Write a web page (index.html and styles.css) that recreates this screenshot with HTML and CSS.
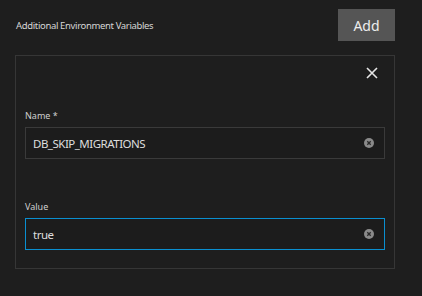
FILE: index.html
```html
<!DOCTYPE html>
<html lang="en">
  <head>
    <meta charset="UTF-8" />
    <meta name="viewport" content="width=device-width, initial-scale=1.0" />
    <title>Environment Variables</title>
    <link rel="stylesheet" href="styles.css">
  </head>
  <body>
    <div class="header">
      <span class="title">Additional Environment Variables</span>
      <button class="add-btn">Add</button>
    </div>

    <div class="card">
      <div class="close-row">
        <svg class="close" width="12" height="12" viewBox="0 0 12 12">
          <path d="M1 1 L11 11 M11 1 L1 11" stroke="#e6e6e6" stroke-width="1.6" fill="none" />
        </svg>
      </div>

      <div class="field first">
        <label class="label">Name *</label>
        <div class="input">
          <span class="value">DB_SKIP_MIGRATIONS</span>
          <span class="clear">
            <svg width="10" height="10" viewBox="0 0 10 10">
              <path d="M3.3 3.3 L6.7 6.7 M6.7 3.3 L3.3 6.7" stroke="#2a2a2a" stroke-width="1.3" />
            </svg>
          </span>
        </div>
      </div>

      <div class="field second">
        <label class="label">Value</label>
        <div class="input focused">
          <span class="value">true</span>
          <span class="clear">
            <svg width="10" height="10" viewBox="0 0 10 10">
              <path d="M3.3 3.3 L6.7 6.7 M6.7 3.3 L3.3 6.7" stroke="#2a2a2a" stroke-width="1.3" />
            </svg>
          </span>
        </div>
      </div>
    </div>
  </body>
</html>
```

FILE: styles.css
```css
body {
  margin: 0;
  background-color: #1e1e1e;
  font-family: "Noto Sans", "Open Sans", sans-serif;
  color: #dcdcdc;
}

.header {
  display: flex;
  justify-content: space-between;
  align-items: center;
  padding: 9px 27px 0 16px;
}

.title {
  font-size: 9.5px;
  color: #d6d6d6;
  letter-spacing: -0.35px;
}

.add-btn {
  width: 57px;
  height: 32px;
  border: none;
  background-color: #555555;
  color: #ededed;
  font-family: "Noto Sans", "Open Sans", sans-serif;
  font-size: 14px;
  padding: 0;
  cursor: pointer;
}

.card {
  margin: 14px 27px 0 15px;
  border: 1px solid #363636;
  padding: 11px 9px 18px 9px;
}

.close-row {
  display: flex;
  justify-content: flex-end;
  padding-right: 7px;
  height: 12px;
}

.close {
  display: block;
}

.field.first {
  margin-top: 31px;
}

.field.second {
  margin-top: 42px;
}

.label {
  display: block;
  font-size: 9px;
  line-height: 12px;
  color: #cfcfcf;
  margin-bottom: 5px;
}

.input {
  display: flex;
  align-items: center;
  justify-content: space-between;
  height: 30px;
  border: 1px solid #3a3a3a;
  padding: 0 10px 0 7px;
  background-color: #1c1c1c;
}

.input.focused {
  border-color: #0a8fd0;
}

.value {
  font-size: 11.5px;
  letter-spacing: -0.5px;
  color: #dedede;
}

.clear {
  display: flex;
  align-items: center;
  justify-content: center;
  width: 10px;
  height: 10px;
  border-radius: 50%;
  background-color: #8a8a8a;
}
```
